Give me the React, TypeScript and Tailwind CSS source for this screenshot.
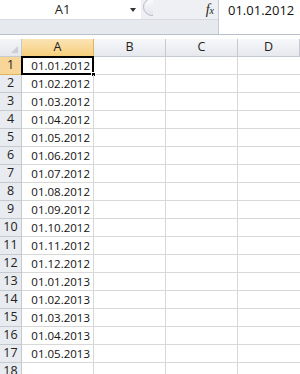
import React from "react";

const dates = [
  "01.01.2012",
  "01.02.2012",
  "01.03.2012",
  "01.04.2012",
  "01.05.2012",
  "01.06.2012",
  "01.07.2012",
  "01.08.2012",
  "01.09.2012",
  "01.10.2012",
  "01.11.2012",
  "01.12.2012",
  "01.01.2013",
  "01.02.2013",
  "01.03.2013",
  "01.04.2013",
  "01.05.2013",
  "",
];

const cols = ["A", "B", "C", "D"];

function FormulaBar() {
  return (
    <div className="flex h-[35px] border-b border-[#b9c0ca]">
      <div className="flex w-[218px] flex-col">
        <div className="flex h-[19px] bg-[#eef0f3]">
          <div className="relative flex w-[141px] items-center justify-center bg-white text-[13px] text-[#222]">
            <span className="-ml-[16px]">A1</span>
            <span className="absolute right-[5px] top-[8px] h-0 w-0 border-x-[3.5px] border-t-[4px] border-x-transparent border-t-[#333]" />
          </div>
          <div className="relative w-[12px] overflow-hidden">
            <div className="absolute -top-[2px] left-[2px] h-[18px] w-[18px] rounded-full border border-[#b8bec8] bg-gradient-to-b from-[#fafbfc] to-[#e2e6eb]" />
          </div>
          <div className="flex flex-1 items-center justify-end pr-[4px]">
            <span className="font-['Liberation_Serif',serif] text-[14px] italic leading-none text-[#222]">
              f
              <span className="text-[10px]">x</span>
            </span>
          </div>
        </div>
        <div className="h-[16px] border-t border-[#d6dbe2] bg-[#e6e9ee]" />
      </div>
      <div className="flex-1 border-l border-[#c4cad3] bg-white pl-[9px] pt-[1px] text-[13px] text-[#111]">
        01.01.2012
      </div>
    </div>
  );
}

function HeaderRow() {
  return (
    <div className="flex h-[18px]">
      <div className="relative w-[22px] shrink-0 border-b border-r border-[#c5cad1] bg-gradient-to-b from-[#f4f5f7] to-[#e4e7ec]">
        <span className="absolute bottom-[3px] right-[3px] h-0 w-0 border-l-[7px] border-t-[7px] border-l-transparent border-t-transparent border-b-0 border-r-[7px] border-r-[#c9ced6]" />
      </div>
      {cols.map((c, i) => (
        <div
          key={c}
          className={
            i === 0
              ? "flex w-[72px] shrink-0 items-center justify-center border-b border-r border-[#e0b45a] bg-gradient-to-b from-[#fbe3b4] to-[#f6cf7c] text-[12.5px] text-[#222]"
              : i === 3
                ? "flex flex-1 items-center justify-center border-b border-r border-[#c5cad1] bg-gradient-to-b from-[#f7f8fa] to-[#e5e8ed] text-[12.5px] text-[#222]"
                : "flex w-[72px] shrink-0 items-center justify-center border-b border-r border-[#c5cad1] bg-gradient-to-b from-[#f7f8fa] to-[#e5e8ed] text-[12.5px] text-[#222]"
          }
        >
          {c}
        </div>
      ))}
    </div>
  );
}

export default function App() {
  return (
    <div className="h-[374px] w-[300px] overflow-hidden bg-white font-['Open_Sans','Liberation_Sans',sans-serif]">
      <FormulaBar />
      <div className="h-[4px] bg-white" />
      <HeaderRow />
      {dates.map((d, r) => (
        <div key={r} className="flex h-[18px]">
          <div
            className={
              r === 0
                ? "flex w-[22px] shrink-0 items-center justify-center border-b border-r border-[#e0b45a] bg-[#f8d697] text-[12.5px] text-[#222]"
                : "flex w-[22px] shrink-0 items-center justify-center border-b border-r border-[#c5cad1] bg-[#e8ebef] text-[12.5px] text-[#222]"
            }
          >
            {r + 1}
          </div>
          <div className="relative flex w-[72px] shrink-0 items-center justify-end border-b border-r border-[#d8d8d8] pr-[3px] pt-[1px] text-[11.5px] text-[#111]">
            {d}
            {r === 0 && (
              <>
                <span className="absolute -left-[1px] -top-[1px] h-[19px] w-[73px] border-2 border-black" />
                <span className="absolute -bottom-[3px] -right-[3px] h-[5px] w-[5px] border border-white bg-black" />
              </>
            )}
          </div>
          <div className="w-[72px] shrink-0 border-b border-r border-[#d8d8d8]" />
          <div className="w-[72px] shrink-0 border-b border-r border-[#d8d8d8]" />
          <div className="flex-1 border-b border-[#d8d8d8]" />
        </div>
      ))}
    </div>
  );
}
